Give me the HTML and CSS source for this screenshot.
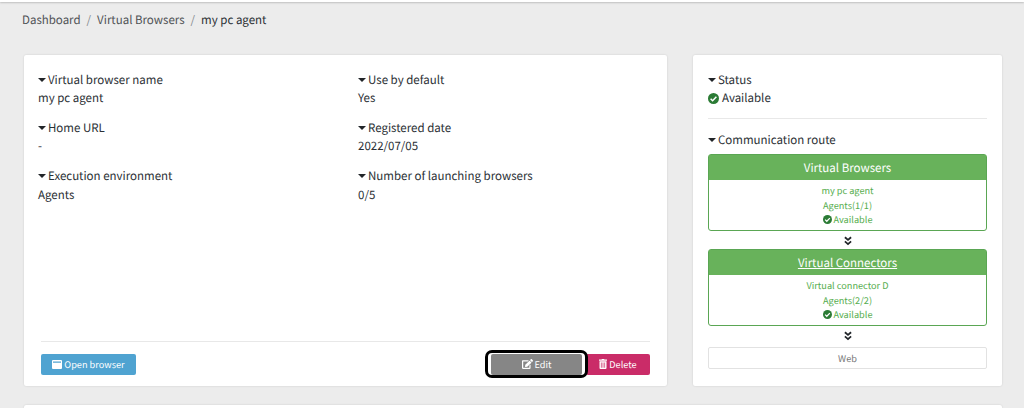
FILE: index.html
```
<!DOCTYPE html>
<html lang="en">
<head>
    <meta charset="UTF-8">
    <meta name="viewport" content="width=device-width, initial-scale=1.0">
    <title>my pc agent - Virtual Browsers</title>
    <link rel="stylesheet" href="styles.css">
</head>
<body>
    <svg class="symbols">
        <symbol id="check" viewBox="0 0 16 16">
            <circle cx="8" cy="8" r="8" fill="currentColor"/>
            <path d="M3.8 8.3l2.9 2.9 5.5-5.7" fill="none" stroke="#fff" stroke-width="2.2"/>
        </symbol>
        <symbol id="chevrons" viewBox="0 0 8 10">
            <path d="M.9 1.2L4 3.9l3.1-2.7M.9 5.4L4 8.1l3.1-2.7" fill="none" stroke="currentColor" stroke-width="1.8"/>
        </symbol>
    </svg>
    <header class="topbar"></header>
    <nav class="breadcrumb">
        <a href="#">Dashboard</a>
        <span class="separator">/</span>
        <a href="#">Virtual Browsers</a>
        <span class="separator">/</span>
        <span class="active">my pc agent</span>
    </nav>
    <main class="container">
        <section class="card detail">
            <dl class="fields">
                <div>
                    <dt>Virtual browser name</dt>
                    <dd>my pc agent</dd>
                </div>
                <div>
                    <dt>Use by default</dt>
                    <dd>Yes</dd>
                </div>
                <div>
                    <dt>Home URL</dt>
                    <dd>-</dd>
                </div>
                <div>
                    <dt>Registered date</dt>
                    <dd>2022/07/05</dd>
                </div>
                <div>
                    <dt>Execution environment</dt>
                    <dd>Agents</dd>
                </div>
                <div>
                    <dt>Number of launching browsers</dt>
                    <dd>0/5</dd>
                </div>
            </dl>
            <div class="actions">
                <button class="btn btn-open">
                    <svg class="icon-window" viewBox="0 0 10 9"><path fill="currentColor" fill-rule="evenodd" d="M1 0h8a1 1 0 0 1 1 1v7a1 1 0 0 1-1 1H1a1 1 0 0 1-1-1V1a1 1 0 0 1 1-1zM1 1.5v1.2h8V1.5z"/></svg>
                    <span>Open browser</span>
                </button>
                <div class="action-group">
                    <div class="highlight">
                        <button class="btn btn-edit">
                            <svg class="icon-edit" viewBox="0 0 576 512"><path fill="currentColor" d="M402.600 83.200l90.200 90.200c3.800 3.800 3.800 10 0 13.800L274.400 405.600l-92.800 10.300c-12.400 1.400-22.900-9.100-21.500-21.500l10.300-92.800L388.800 83.200c3.800-3.800 10-3.800 13.800 0zm162-22.900l-48.800-48.800c-15.200-15.200-39.900-15.200-55.200 0l-35.400 35.400c-3.800 3.800-3.800 10 0 13.800l90.200 90.200c3.800 3.800 10 3.800 13.800 0l35.400-35.400c15.200-15.300 15.200-40 0-55.200zM384 346.200V448H64V128h229.800c3.200 0 6.200-1.300 8.500-3.500l40-40c7.600-7.600 2.200-20.500-8.500-20.500H48C21.500 64 0 85.500 0 112v352c0 26.500 21.500 48 48 48h352c26.500 0 48-21.500 48-48V306.200c0-10.700-12.900-16-20.500-8.500l-40 40c-2.200 2.300-3.500 5.300-3.500 8.500z"/></svg>
                            <span>Edit</span>
                        </button>
                    </div>
                    <button class="btn btn-delete">
                        <svg class="icon-trash" viewBox="0 0 8 10"><path fill="currentColor" fill-rule="evenodd" d="M2.500 .5L3 0h2l.5.5H8v1.200H0V.5zM.5 2.300h7V9a1 1 0 0 1-1 1h-5a1 1 0 0 1-1-1zM1.900 3.400v5.300h.7V3.400zm1.750 0v5.300h.7V3.400zm1.750 0v5.300h.7V3.400z"/></svg>
                        <span>Delete</span>
                    </button>
                </div>
            </div>
        </section>
        <section class="card status">
            <dl>
                <dt>Status</dt>
                <dd class="available"><svg class="icon-check"><use href="#check"/></svg>Available</dd>
            </dl>
            <hr>
            <h2 class="route-title">Communication route</h2>
            <div class="node">
                <h3>Virtual Browsers</h3>
                <p>my pc agent</p>
                <p>Agents(1/1)</p>
                <p class="available"><svg class="icon-check"><use href="#check"/></svg>Available</p>
            </div>
            <svg class="icon-chevrons"><use href="#chevrons"/></svg>
            <div class="node">
                <h3><a href="#">Virtual Connectors</a></h3>
                <p>Virtual connector D</p>
                <p>Agents(2/2)</p>
                <p class="available"><svg class="icon-check"><use href="#check"/></svg>Available</p>
            </div>
            <svg class="icon-chevrons"><use href="#chevrons"/></svg>
            <div class="web">Web</div>
        </section>
        <section class="card next"></section>
    </main>
</body>
</html>
```

FILE: styles.css
```
* {
    box-sizing: border-box;
}
body {
    margin: 0;
    height: 408px;
    overflow: hidden;
    background-color: #ececec;
    color: #2b3035;
    font-family: "Noto Sans CJK JP", sans-serif;
    font-size: 11.5px;
    line-height: 18.5px;
    text-rendering: geometricPrecision;
}
dl, dd, p, h2, h3 {
    margin: 0;
    font-size: inherit;
    font-weight: normal;
}
.symbols {
    display: none;
}
.topbar {
    height: 2px;
    background-color: #fff;
    box-shadow: 0 1px 2px rgba(0, 0, 0, 0.2);
}
.breadcrumb {
    display: flex;
    gap: 6px;
    height: 53px;
    padding: 9px 22px;
}
.breadcrumb a {
    color: #505356;
    text-decoration: none;
}
.separator {
    color: #858a8e;
}
.container {
    display: grid;
    grid-template-columns: 643px 309px;
    grid-template-rows: 331px 3px;
    gap: 19px 26px;
    padding-left: 24px;
}
.card {
    background-color: #fff;
    border-radius: 2px;
    box-shadow: 0 0 2px rgba(0, 0, 0, 0.15);
}
.next {
    grid-column: 1 / 3;
    border-radius: 2px 2px 0 0;
}
.detail {
    display: flex;
    flex-direction: column;
    justify-content: space-between;
    padding: 15.6px 17px 8px 14px;
}
.fields {
    display: grid;
    grid-template-columns: 320px 1fr;
    row-gap: 11.3px;
}
dt::before, .route-title::before {
    content: "";
    display: inline-block;
    margin-right: 2px;
    vertical-align: 2px;
    border: 4px solid transparent;
    border-top-color: #212529;
    border-bottom: 0;
}
.actions {
    display: flex;
    justify-content: space-between;
    margin-left: 3px;
    padding-top: 8px;
    border-top: 1px solid #e8e8e8;
}
.action-group {
    display: flex;
}
.btn {
    display: flex;
    align-items: center;
    justify-content: center;
    gap: 2px;
    height: 21px;
    padding: 0 0 1px;
    border: 0;
    border-radius: 2px;
    color: #fff;
    font-family: inherit;
    font-size: 9.2px;
    line-height: 19px;
    text-rendering: inherit;
}
.btn-open {
    width: 95px;
    margin-top: 4px;
    background-color: #4fa3d1;
}
.btn-edit {
    width: 91px;
    background-color: #868686;
}
.highlight {
    position: relative;
    height: 28px;
    padding: 1px 3px;
    border: 3px solid #000;
    border-radius: 7px;
    background-color: #fff;
}
.btn-delete {
    width: 64px;
    margin-top: 4px;
    margin-left: -2px;
    background-color: #ca2c68;
}
.icon-window {
    width: 10px;
    height: 9px;
}
.icon-edit {
    width: 11px;
    height: 10px;
}
.icon-trash {
    width: 8px;
    height: 10px;
}
.status {
    display: flex;
    flex-direction: column;
    padding: 15.6px 15px 0;
}
.available {
    display: flex;
    align-items: center;
    gap: 3px;
}
.icon-check {
    width: 11px;
    height: 11px;
    color: #2b7b35;
}
hr {
    width: 100%;
    margin: 10.4px 0 12px;
    border: 0;
    border-top: 1px solid #e8e8e8;
}
.route-title {
    margin-bottom: 4.5px;
}
.node {
    height: 77px;
    border: 1px solid #5aa653;
    border-radius: 3px;
    color: #55ad4e;
    font-size: 9.2px;
    line-height: 14.7px;
    text-align: center;
}
.node h3 {
    height: 25px;
    margin-bottom: 3px;
    background-color: #68b25b;
    color: #fff;
    font-size: 11.5px;
    line-height: 26px;
}
.node a {
    color: inherit;
}
.node .available {
    justify-content: center;
    gap: 2px;
}
.node .icon-check {
    width: 9px;
    height: 9px;
}
.icon-chevrons {
    align-self: center;
    width: 8px;
    height: 10px;
    margin: 5px 0 3px;
    color: #212529;
}
.web {
    height: 22px;
    margin-top: 3px;
    border: 1px solid #e2e2e2;
    border-radius: 2px;
    color: #777;
    font-size: 9.2px;
    line-height: 20px;
    text-align: center;
}
```
